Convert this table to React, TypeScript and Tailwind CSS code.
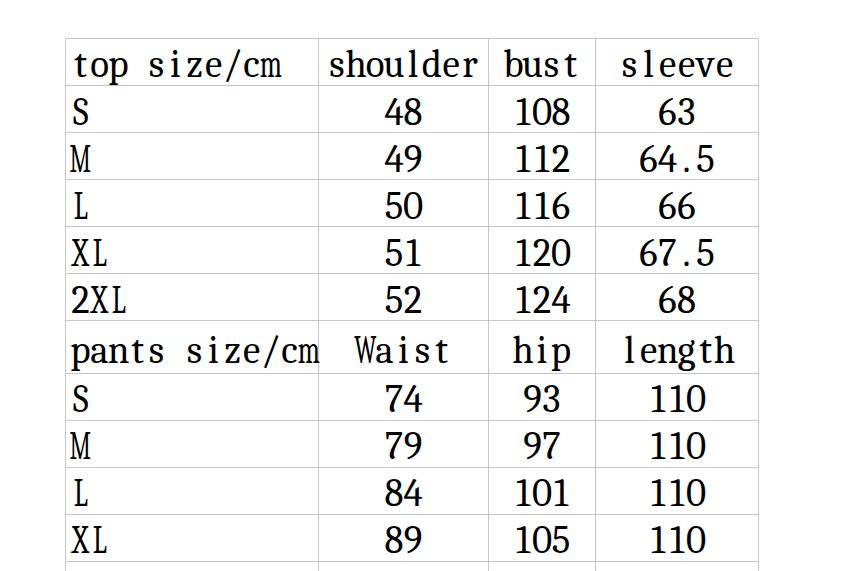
import React from "react";

const SCALE: Record<string, string> = {
  m: "scale-x-[0.7]",
  w: "scale-x-[0.7]",
  M: "scale-x-[0.62]",
  W: "scale-x-[0.64]",
  X: "scale-x-[0.76]",
  L: "scale-x-[0.72]",
  S: "scale-x-[0.88]",
};

function Mono({ text }: { text: string }) {
  return (
    <span className="flex items-end">
      {text.split("").map((ch, i) => (
        <span key={i} className="flex w-[19px] justify-center whitespace-pre">
          <span className={"inline-block " + (SCALE[ch] ?? "")}>{ch}</span>
        </span>
      ))}
    </span>
  );
}

type Row = { h: string; pb: string; cells: string[] };

const rows: Row[] = [
  { h: "h-[47px]", pb: "pb-[1px]", cells: ["top size/cm", "shoulder", "bust", "sleeve"] },
  { h: "h-[47px]", pb: "pb-0", cells: ["S", "48", "108", "63"] },
  { h: "h-[47px]", pb: "pb-0", cells: ["M", "49", "112", "64.5"] },
  { h: "h-[47px]", pb: "pb-0", cells: ["L", "50", "116", "66"] },
  { h: "h-[47px]", pb: "pb-0", cells: ["XL", "51", "120", "67.5"] },
  { h: "h-[47px]", pb: "pb-0", cells: ["2XL", "52", "124", "68"] },
  { h: "h-[53px]", pb: "pb-[3px]", cells: ["pants size/cm", "Waist", "hip", "length"] },
  { h: "h-[47px]", pb: "pb-[1px]", cells: ["S", "74", "93", "110"] },
  { h: "h-[47px]", pb: "pb-[1px]", cells: ["M", "79", "97", "110"] },
  { h: "h-[47px]", pb: "pb-[1px]", cells: ["L", "84", "101", "110"] },
  { h: "h-[47px]", pb: "pb-[1px]", cells: ["XL", "89", "105", "110"] },
  { h: "h-[47px]", pb: "pb-[1px]", cells: ["", "", "", ""] },
];

export default function App() {
  return (
    <div className="h-[571px] w-[864px] overflow-hidden bg-white font-serif text-[39px] leading-none text-black">
      <div className="ml-[65px] mt-[38px] grid w-[694px] grid-cols-[253px_170px_107px_163px] border-l border-t border-[#c6c6c6]">
        {rows.map((r, ri) =>
          r.cells.map((c, ci) => (
            <div
              key={ri + "-" + ci}
              className={
                "flex items-end border-b border-r border-[#c6c6c6] " +
                r.h +
                " " +
                r.pb +
                " " +
                (ci === 0 ? "justify-start pl-[5px]" : "justify-center")
              }
            >
              <Mono text={c} />
            </div>
          ))
        )}
      </div>
    </div>
  );
}
